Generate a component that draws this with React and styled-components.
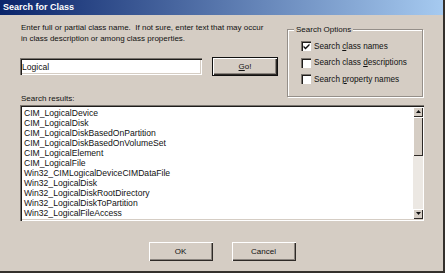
import React from 'react'
import styled, { createGlobalStyle } from 'styled-components'

const face = '#d5cdc4'

const GlobalStyle = createGlobalStyle`
  html, body { margin: 0; padding: 0; }
  body {
    background: ${face};
    font-family: "Liberation Sans", Arial, sans-serif;
    color: #111;
  }
`

const results = [
    'CIM_LogicalDevice',
    'CIM_LogicalDisk',
    'CIM_LogicalDiskBasedOnPartition',
    'CIM_LogicalDiskBasedOnVolumeSet',
    'CIM_LogicalElement',
    'CIM_LogicalFile',
    'Win32_CIMLogicalDeviceCIMDataFile',
    'Win32_LogicalDisk',
    'Win32_LogicalDiskRootDirectory',
    'Win32_LogicalDiskToPartition',
    'Win32_LogicalFileAccess',
]

const Check = ({ checked, children }) => (
    <OptionRow>
        <Box>
            {checked && (
                <svg width="7" height="7" viewBox="0 0 7 7">
                    <path d="M0.5 2.5 L2.5 4.5 L6.5 0.5 L6.5 2.5 L2.5 6.5 L0.5 4.5 Z" fill="#111" />
                </svg>
            )}
        </Box>
        <span>{children}</span>
    </OptionRow>
)

const Arrow = ({ down }) => (
    <svg width="5" height="3" viewBox="0 0 5 3">
        <path d={down ? 'M0 0 H5 L2.5 3 Z' : 'M0 3 H5 L2.5 0 Z'} fill="#111" />
    </svg>
)

const App = () => {
    return (
        <>
            <GlobalStyle />
            <Window>
                <TitleBar>Search for Class</TitleBar>
                <Body>
                    <Top>
                        <LeftCol>
                            <Hint>
                                Enter full or partial class name.&nbsp; If not sure, enter text that may occur<br />
                                in class description or among class properties.
                            </Hint>
                            <SearchRow>
                                <TextField defaultValue="Logical" />
                                <Button $default $width={66}><u>G</u>o!</Button>
                            </SearchRow>
                        </LeftCol>
                        <Group>
                            <Legend>Search Options</Legend>
                            <Check checked>Search <u>c</u>lass names</Check>
                            <Check>Search class <u>d</u>escriptions</Check>
                            <Check>Search <u>p</u>roperty names</Check>
                        </Group>
                    </Top>
                    <Label>Search results:</Label>
                    <ListBox>
                        <Items>
                            {results.map((r) => (
                                <Item key={r}>{r}</Item>
                            ))}
                        </Items>
                        <ScrollBar>
                            <ScrollButton><Arrow /></ScrollButton>
                            <Thumb />
                            <Track />
                            <ScrollButton><Arrow down /></ScrollButton>
                        </ScrollBar>
                    </ListBox>
                    <Footer>
                        <Button $width={64}>OK</Button>
                        <Button $width={64}>Cancel</Button>
                    </Footer>
                </Body>
            </Window>
        </>
    )
}

const Window = styled.div`
    width: 445px;
    height: 273px;
    box-sizing: border-box;
    background: ${face};
    border-right: 2px solid #34302c;
    border-bottom: 2px solid #34302c;
    display: flex;
    flex-direction: column;
`

const TitleBar = styled.div`
    height: 15px;
    flex: none;
    padding-left: 3px;
    background: linear-gradient(to right, #0a246a, #a6caf0);
    color: #fff;
    font-weight: bold;
    font-size: 9px;
    line-height: 15px;
`

const Body = styled.div`
    padding: 7px 19px 0 20px;
    display: flex;
    flex-direction: column;
`

const Top = styled.div`
    display: flex;
    gap: 9px;
`

const LeftCol = styled.div`
    width: 258px;
    display: flex;
    flex-direction: column;
`

const Hint = styled.p`
    margin: 0 0 0 1px;
    font-size: 8px;
    line-height: 11px;
    white-space: nowrap;
`

const SearchRow = styled.div`
    margin-top: 13px;
    display: flex;
    align-items: center;
    justify-content: space-between;
`

const TextField = styled.input`
    width: 182px;
    height: 17px;
    box-sizing: border-box;
    margin: 0;
    padding: 0 2px;
    border: none;
    background: #fff;
    box-shadow: inset 1px 1px 0 #7a756f, inset 2px 2px 0 #1e1c1a, inset -1px -1px 0 #fff, inset -2px -2px 0 ${face};
    font-family: "Liberation Sans", Arial, sans-serif;
    font-size: 8.6px;
    color: #111;
    outline: none;
`

const Button = styled.div`
    width: ${({ $width }) => $width}px;
    height: 19px;
    box-sizing: border-box;
    display: flex;
    align-items: center;
    justify-content: center;
    background: ${face};
    font-size: 8px;
    border: ${({ $default }) => ($default ? '1px solid #111' : 'none')};
    box-shadow: inset 1px 1px 0 #fff, inset -1px -1px 0 #2e2a27, inset -2px -2px 0 #8a847e;
`

const Group = styled.fieldset`
    width: 136px;
    box-sizing: border-box;
    margin: 2px 0 -4px 0;
    padding: 3px 0 8px 13px;
    border: 1px solid #958f89;
    box-shadow: inset 1px 1px 0 #fff, 1px 1px 0 #fff;
`

const Legend = styled.legend`
    margin-left: -7px;
    padding: 0 2px;
    font-size: 8px;
    line-height: 11px;
    background: ${face};
`

const OptionRow = styled.div`
    height: 16.5px;
    display: flex;
    align-items: center;
    gap: 3px;
    font-size: 8.2px;
    white-space: nowrap;
`

const Box = styled.div`
    width: 10px;
    height: 10px;
    box-sizing: border-box;
    flex: none;
    display: flex;
    align-items: center;
    justify-content: center;
    padding: 1px 0 0 1px;
    background: #fff;
    box-shadow: inset 1px 1px 0 #7a756f, inset 2px 2px 0 #1e1c1a, inset -1px -1px 0 #fff;
`

const Label = styled.div`
    margin: 0 0 0 1px;
    font-size: 8px;
    line-height: 11px;
`

const ListBox = styled.div`
    margin-top: 1px;
    height: 116px;
    box-sizing: border-box;
    padding: 2px 1px 1px 2px;
    display: flex;
    background: #fff;
    box-shadow: inset 1px 1px 0 #7a756f, inset 2px 2px 0 #1e1c1a, inset -1px -1px 0 #fff, inset -2px -2px 0 ${face};
`

const Items = styled.div`
    flex: 1;
    overflow: hidden;
    padding: 1px 0 0 2px;
`

const Item = styled.div`
    font-size: 8.6px;
    line-height: 10px;
    white-space: nowrap;
`

const ScrollBar = styled.div`
    width: 10px;
    display: flex;
    flex-direction: column;
    padding-bottom: 1px;
`

const ScrollButton = styled.div`
    height: 10px;
    flex: none;
    display: flex;
    align-items: center;
    justify-content: center;
    background: ${face};
    box-shadow: inset 1px 1px 0 #fff, inset -1px -1px 0 #2e2a27;
`

const Thumb = styled.div`
    height: 39px;
    flex: none;
    background: ${face};
    box-shadow: inset 1px 1px 0 #fff, inset -1px -1px 0 #2e2a27;
`

const Track = styled.div`
    flex: 1;
    background: #ece8e3;
`

const Footer = styled.div`
    margin-top: 21px;
    display: flex;
    justify-content: center;
    gap: 19px;
`

export default App
